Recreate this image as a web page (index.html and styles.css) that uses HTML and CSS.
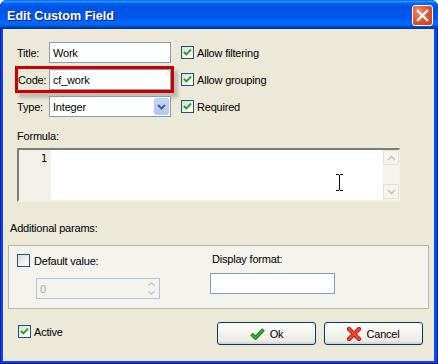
FILE: index.html
```html
<!DOCTYPE html>
<html>
<head>
<meta charset="utf-8">
<title>Edit Custom Field</title>
<link rel="stylesheet" href="styles.css">
</head>
<body>
<div class="window">
  <div class="titlebar">
    <span class="title">Edit Custom Field</span>
    <span class="close">
      <svg width="21" height="21" viewBox="0 0 21 21"><path d="M6 6 L15 15 M15 6 L6 15" stroke="#fff" stroke-width="2.4" stroke-linecap="square"/></svg>
    </span>
  </div>
  <div class="client">
    <div class="fields">
      <div class="row">
        <span class="lbl">Title:</span>
        <div class="input">Work</div>
        <span class="check on"><svg width="11" height="11" viewBox="0 0 11 11"><path d="M2 5 L4.3 7.4 L9 2.6" fill="none" stroke="#21A121" stroke-width="2"/></svg></span>
        <span class="clabel">Allow filtering</span>
      </div>
      <div class="row">
        <div class="hl">
          <span class="lbl">Code:</span>
          <div class="input">cf_work</div>
        </div>
        <span class="check on"><svg width="11" height="11" viewBox="0 0 11 11"><path d="M2 5 L4.3 7.4 L9 2.6" fill="none" stroke="#21A121" stroke-width="2"/></svg></span>
        <span class="clabel">Allow grouping</span>
      </div>
      <div class="row">
        <span class="lbl">Type:</span>
        <div class="input select">
          <span>Integer</span>
          <span class="ddbtn"><svg width="9" height="6" viewBox="0 0 9 6"><path d="M1 1 L4.5 4.5 L8 1" fill="none" stroke="#4D6185" stroke-width="2"/></svg></span>
        </div>
        <span class="check on"><svg width="11" height="11" viewBox="0 0 11 11"><path d="M2 5 L4.3 7.4 L9 2.6" fill="none" stroke="#21A121" stroke-width="2"/></svg></span>
        <span class="clabel">Required</span>
      </div>
    </div>

    <div class="flabel">Formula:</div>
    <div class="editor">
      <div class="gutter">1</div>
      <div class="code"></div>
      <div class="vscroll">
        <span class="sbtn"><svg width="9" height="6" viewBox="0 0 9 6"><path d="M1 5 L4.5 1.5 L8 5" fill="none" stroke="#C9C7BA" stroke-width="1.6"/></svg></span>
        <span class="sbtn"><svg width="9" height="6" viewBox="0 0 9 6"><path d="M1 1 L4.5 4.5 L8 1" fill="none" stroke="#C9C7BA" stroke-width="1.6"/></svg></span>
      </div>
      <svg class="ibeam" width="7" height="17" viewBox="0 0 7 17"><path d="M0 0.5 H3 M4 0.5 H7 M3.5 1 V16 M0 16.5 H3 M4 16.5 H7" stroke="#000" stroke-width="1"/></svg>
    </div>

    <div class="alabel">Additional params:</div>
    <div class="group">
      <div class="gleft">
        <div class="dv-row">
          <span class="check"></span>
          <span class="clabel">Default value:</span>
        </div>
        <div class="spin">
          <span class="spin-val">0</span>
          <span class="spin-btns">
            <svg width="7" height="4" viewBox="0 0 7 4"><path d="M0.5 3.5 L3.5 0.8 L6.5 3.5" fill="none" stroke="#C9C7BA" stroke-width="1.2"/></svg>
            <svg width="7" height="4" viewBox="0 0 7 4"><path d="M0.5 0.5 L3.5 3.2 L6.5 0.5" fill="none" stroke="#C9C7BA" stroke-width="1.2"/></svg>
          </span>
        </div>
      </div>
      <div class="gright">
        <div class="dlabel">Display format:</div>
        <div class="input dinput"></div>
      </div>
    </div>

    <div class="bottom">
      <div class="active">
        <span class="check on"><svg width="11" height="11" viewBox="0 0 11 11"><path d="M2 5 L4.3 7.4 L9 2.6" fill="none" stroke="#21A121" stroke-width="2"/></svg></span>
        <span class="clabel">Active</span>
      </div>
      <div class="buttons">
        <span class="btn">
          <svg width="15" height="12" viewBox="0 0 15 12"><path d="M1.5 6 L5.5 10 L13.5 1.5" fill="none" stroke="#0E6E12" stroke-width="3.6" stroke-linejoin="round"/><path d="M1.5 6 L5.5 10 L13.5 1.5" fill="none" stroke="#2DB22D" stroke-width="2" stroke-linejoin="round"/></svg>
          <span>Ok</span>
        </span>
        <span class="btn">
          <svg width="14" height="14" viewBox="0 0 14 14"><path d="M2 2 L12 12 M12 2 L2 12" stroke="#9E1A10" stroke-width="4.2" stroke-linecap="round"/><path d="M2 2 L12 12 M12 2 L2 12" stroke="#F0442C" stroke-width="2.6" stroke-linecap="round"/></svg>
          <span>Cancel</span>
        </span>
      </div>
    </div>
  </div>
</div>
</body>
</html>
```

FILE: styles.css
```css
* { box-sizing: border-box; }
html, body { margin: 0; padding: 0; background: #ffffff; }
body {
  font-family: "Liberation Sans", Arial, sans-serif;
  font-size: 11px;
  letter-spacing: -0.2px;
  color: #000;
}

.window {
  width: 438px;
  height: 364px;
  display: flex;
  flex-direction: column;
  background: #0B4BDD;
  border-radius: 7px 7px 0 0;
  overflow: hidden;
  box-shadow: inset 1px 0 #0019CF, inset -1px 0 #00138C, inset 0 -1px #00138C;
}

.titlebar {
  height: 29px;
  flex: none;
  display: flex;
  align-items: center;
  padding: 0 5px 0 7px;
  background: linear-gradient(to bottom,
    #0058EE 0%, #3593FF 4%, #288EFF 6%, #127DFF 8%, #036FFC 10%,
    #0262EE 14%, #0057E5 20%, #0054E3 24%, #0055EB 56%, #005BF5 66%,
    #026AFE 76%, #0062EF 86%, #0052D6 92%, #0040AB 94%, #003092 100%);
}
.title {
  flex: 1;
  margin-top: 3px;
  color: #fff;
  font-weight: bold;
  font-size: 12.6px;
  letter-spacing: 0;
  text-shadow: 1px 1px #0A1883;
}
.close {
  width: 21px;
  height: 21px;
  margin-top: 2px;
  border: 1px solid #fff;
  border-radius: 3px;
  background: radial-gradient(circle at 30% 30%, #F08A6A 0%, #E25A32 45%, #C73A12 100%);
  display: flex;
  align-items: center;
  justify-content: center;
}
.close svg { display: block; margin: -1px; }

.client {
  flex: 1;
  margin: 0 4px 3px 3px;
  background: #ECE9D8;
  display: flex;
  flex-direction: column;
}

.fields {
  margin-top: 13px;
  padding-left: 14px;
  display: flex;
  flex-direction: column;
  gap: 6px;
}
.row {
  display: flex;
  align-items: center;
  height: 21px;
}
.lbl { width: 32px; flex: none; }
.input {
  width: 122px;
  height: 21px;
  flex: none;
  border: 1px solid #7F9DB9;
  background: #fff;
  padding-left: 3px;
  display: flex;
  align-items: center;
}
.row > .check { margin-left: 10px; }
.hl {
  display: flex;
  align-items: center;
  border: 3px solid #CC0000;
  margin: -3px 0 -3px -2px;
  box-shadow: 4px 5px 3px rgba(110, 110, 110, 0.35);
}
.hl .lbl { width: 31px; }
.row > .hl + .check { margin-left: 7px; }

.select { justify-content: space-between; padding-right: 1px; }
.ddbtn {
  width: 15px;
  height: 17px;
  border-radius: 2px;
  background: linear-gradient(to bottom, #C6D6FC, #B2C6F4);
  border: 1px solid #B9CBF5;
  display: flex;
  align-items: center;
  justify-content: center;
}
.ddbtn svg { display: block; }

.check {
  width: 13px;
  height: 13px;
  flex: none;
  border: 1px solid #1C5180;
  background: linear-gradient(135deg, #DCDBD5, #F6F6F3 70%, #fff);
  display: flex;
  align-items: center;
  justify-content: center;
}
.check svg { display: block; }
.clabel { margin-left: 3px; white-space: nowrap; }

.flabel {
  margin: 13px 0 0 14px;
  line-height: 13px;
}
.editor {
  position: relative;
  margin: 5px 0 0 14px;
  width: 383px;
  height: 54px;
  border-top: 2px solid #7C7C7C;
  border-left: 2px solid #7C7C7C;
  border-right: 1px solid #F6F2DF;
  border-bottom: 2px solid #F6F2DF;
  background: #fff;
  display: flex;
}
.gutter {
  width: 32px;
  background: #F3F1E7;
  text-align: right;
  padding: 3px 4px 0 0;
  font-family: "DejaVu Sans Mono", "Liberation Mono", monospace;
  font-size: 10px;
  letter-spacing: 0;
  line-height: 12px;
}
.code { flex: 1; }
.vscroll {
  width: 16px;
  display: flex;
  flex-direction: column;
  justify-content: space-between;
  background: #F5F4EF;
  padding: 0 0 1px;
}
.sbtn {
  height: 15px;
  border: 1px solid #E3E1D6;
  border-radius: 2px;
  background: #F4F3EC;
  display: flex;
  align-items: center;
  justify-content: center;
}
.sbtn svg { display: block; }
.ibeam { position: absolute; left: 317px; top: 24px; }

.alabel {
  margin: 20px 0 0 7px;
  line-height: 13px;
}
.group {
  margin: 10px 0 0 5px;
  width: 421px;
  height: 64px;
  border: 1px solid #B8B6AA;
  background: #F4F3EE;
  display: grid;
  grid-template-columns: 201px 1fr;
  padding-top: 8px;
}
.gleft { padding-left: 8px; }
.dv-row { display: flex; align-items: center; height: 13px; }
.dv-row .clabel { margin-left: 4px; }
.spin {
  margin: 11px 0 0 19px;
  width: 124px;
  height: 21px;
  border: 1px solid #B3C2D8;
  display: flex;
  align-items: center;
  justify-content: space-between;
  padding: 0 1px 0 3px;
  color: #ACA899;
}
.spin-btns {
  width: 14px;
  height: 17px;
  display: flex;
  flex-direction: column;
  align-items: center;
  justify-content: space-around;
}
.spin-btns svg { display: block; }
.gright { display: flex; flex-direction: column; }
.dlabel { margin-top: -1px; padding-left: 2px; line-height: 13px; }
.dinput { margin-top: 7px; width: 125px; }

.bottom {
  display: flex;
  align-items: flex-start;
  margin-top: 13px;
  padding: 0 11px 0 15px;
}
.active { display: flex; align-items: center; margin-top: 3px; }
.buttons { margin-left: auto; display: flex; gap: 8px; }
.btn {
  width: 99px;
  height: 23px;
  border: 1px solid #003C74;
  border-radius: 3px;
  background: linear-gradient(to bottom, #FFFFFF 0%, #F6F5F0 40%, #ECEBE4 85%, #D6D0C5 100%);
  display: flex;
  align-items: center;
  justify-content: center;
  gap: 5px;
}
.btn svg { display: block; }
```
